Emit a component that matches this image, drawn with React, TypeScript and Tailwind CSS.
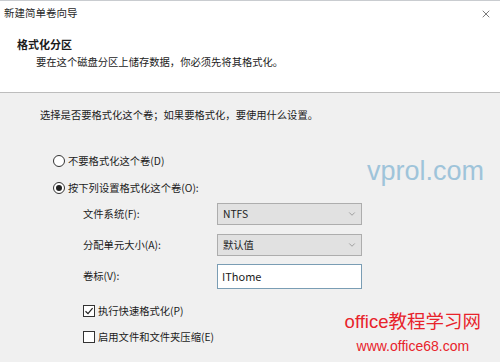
import { ChevronDown, X } from "lucide-react"

const font = "font-['Noto_Sans_CJK_SC','Microsoft_YaHei',sans-serif]"

function Radio({ checked, label }: { checked?: boolean; label: string }) {
  return (
    <div className="flex h-4 items-center gap-[3px]">
      <span className="flex h-[12px] w-[12px] items-center justify-center rounded-full border border-[#333] bg-white">
        {checked && <span className="h-[6px] w-[6px] rounded-full bg-[#222]" />}
      </span>
      <span>{label}</span>
    </div>
  )
}

function Check({ checked, label }: { checked?: boolean; label: string }) {
  return (
    <div className="flex h-4 items-center gap-[3px]">
      <span className="flex h-[12px] w-[12px] items-center justify-center border border-[#333] bg-white">
        {checked && (
          <svg width="10" height="10" viewBox="0 0 10 10">
            <path d="M1.5 5.2 L4 7.6 L8.6 2.2" fill="none" stroke="#222" strokeWidth="1.2" />
          </svg>
        )}
      </span>
      <span>{label}</span>
    </div>
  )
}

function Select({ value }: { value: string }) {
  return (
    <div className="flex h-[22px] w-[145px] items-center justify-between border border-[#adadad] bg-[#e1e1e1] pl-[5px] pr-[4px]">
      <span>{value}</span>
      <ChevronDown className="h-[10px] w-[10px] text-[#777]" strokeWidth={1.5} />
    </div>
  )
}

function Row({ label, children, className }: { label: string; children: React.ReactNode; className?: string }) {
  return (
    <div className={"flex items-center " + (className ?? "")}>
      <span className="w-[134px]">{label}</span>
      {children}
    </div>
  )
}

export default function App() {
  return (
    <div className={`relative h-[362px] w-[500px] overflow-hidden bg-[#f0f0f0] text-[10.3px] leading-none text-[#1b1b1b] ${font}`}>
      <header className="h-[93px] border-t border-b border-t-[#c9ccd0] border-b-[#bdbdbd] bg-white">
        <div className="flex h-[25px] items-center justify-between pl-[4px] pr-[8px]">
          <span className="text-[10.5px] text-[#2a2a2a]">新建简单卷向导</span>
          <X className="h-[12px] w-[12px] text-[#333]" strokeWidth={1.3} />
        </div>
        <div className="mt-[10px] flex h-4 items-center pl-[17px] text-[11px] font-bold">格式化分区</div>
        <div className="mt-[2px] flex h-4 items-center pl-[36px]">
          要在这个磁盘分区上储存数据，你必须先将其格式化。
        </div>
      </header>

      <main className="pl-[40px]">
        <div className="mt-[14px] flex h-4 items-center">选择是否要格式化这个卷；如果要格式化，要使用什么设置。</div>

        <div className="pl-[13px]">
          <div className="mt-[30px]">
            <Radio label="不要格式化这个卷(D)" />
          </div>
          <div className="mt-[11px]">
            <Radio checked label="按下列设置格式化这个卷(O):" />
          </div>

          <div className="pl-[30px]">
            <Row label="文件系统(F):" className="mt-[7px]">
              <Select value="NTFS" />
            </Row>
            <Row label="分配单元大小(A):" className="mt-[9px]">
              <Select value="默认值" />
            </Row>
            <Row label="卷标(V):" className="mt-[8px]">
              <div className="flex h-[25px] w-[145px] items-center border border-[#7a9db4] bg-white pl-[4px] text-[11px]">
                IThome
              </div>
            </Row>

            <div className="mt-[14px]">
              <Check checked label="执行快速格式化(P)" />
            </div>
            <div className="mt-[10px]">
              <Check label="启用文件和文件夹压缩(E)" />
            </div>
          </div>
        </div>
      </main>

      <div className="absolute left-[367px] top-[158px] font-['Liberation_Sans',sans-serif] text-[27px] leading-none text-[#9fc4da]">
        vprol.com
      </div>
      <div className="absolute right-[19px] top-[313px] flex flex-col items-center leading-none text-[#e8232b]">
        <span className="font-['Liberation_Sans','Noto_Sans_CJK_SC',sans-serif] text-[18.5px]">office教程学习网</span>
        <span className="mt-[7px] font-['Liberation_Sans',sans-serif] text-[14px]">www.office68.com</span>
      </div>
    </div>
  )
}
